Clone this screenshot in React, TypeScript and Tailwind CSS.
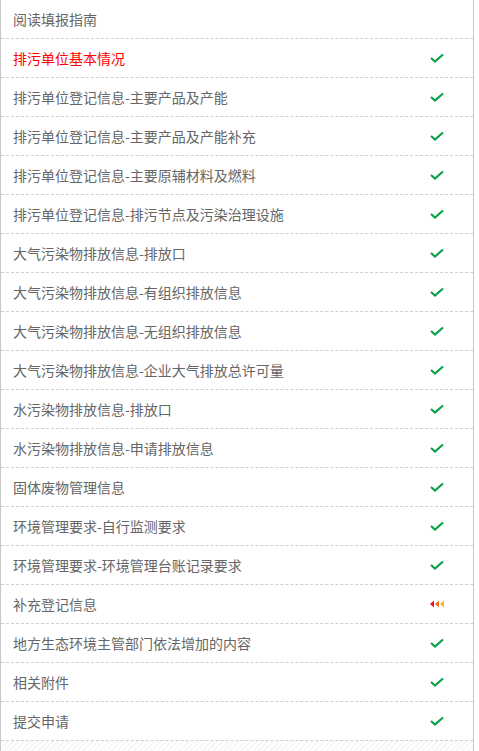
import React from 'react';

const items = [
  { label: '阅读填报指南', state: 'none' },
  { label: '排污单位基本情况', state: 'done', active: true },
  { label: '排污单位登记信息-主要产品及产能', state: 'done' },
  { label: '排污单位登记信息-主要产品及产能补充', state: 'done' },
  { label: '排污单位登记信息-主要原辅材料及燃料', state: 'done' },
  { label: '排污单位登记信息-排污节点及污染治理设施', state: 'done' },
  { label: '大气污染物排放信息-排放口', state: 'done' },
  { label: '大气污染物排放信息-有组织排放信息', state: 'done' },
  { label: '大气污染物排放信息-无组织排放信息', state: 'done' },
  { label: '大气污染物排放信息-企业大气排放总许可量', state: 'done' },
  { label: '水污染物排放信息-排放口', state: 'done' },
  { label: '水污染物排放信息-申请排放信息', state: 'done' },
  { label: '固体废物管理信息', state: 'done' },
  { label: '环境管理要求-自行监测要求', state: 'done' },
  { label: '环境管理要求-环境管理台账记录要求', state: 'done' },
  { label: '补充登记信息', state: 'todo' },
  { label: '地方生态环境主管部门依法增加的内容', state: 'done' },
  { label: '相关附件', state: 'done' },
  { label: '提交申请', state: 'done' },
];

function Check() {
  return (
    <svg width="14" height="10" viewBox="0 0 14 10">
      <path d="M1 5 L5 8.5 L13 1.5" fill="none" stroke="#0aa04a" strokeWidth="2.2" strokeLinejoin="miter" />
    </svg>
  );
}

function Arrows() {
  return (
    <svg width="14" height="8" viewBox="0 0 14 8">
      <path d="M0 4 L4 0.5 L4 7.5 Z" fill="#e8101a" />
      <path d="M5 4 L9 0.5 L9 7.5 Z" fill="#f26a1b" />
      <path d="M10 4 L14 0.5 L14 7.5 Z" fill="#fbb41c" />
    </svg>
  );
}

export default function App() {
  return (
    <div
      className="w-[474px] h-[751px] bg-white border-l border-r border-[#c8c8c8] flex flex-col overflow-hidden"
      style={{ fontFamily: '"Microsoft YaHei", "Noto Sans CJK SC", sans-serif' }}
    >
      {items.map((item, i) => (
        <div
          key={i}
          className="h-[39px] shrink-0 flex items-center justify-between pl-3 pr-[29px] border-b border-dashed border-[#cfcfcf]"
        >
          <span className={`text-[14px] ${item.active ? 'text-[#ff0000]' : 'text-[#666666]'}`}>
            {item.label}
          </span>
          <span className="flex items-center justify-center w-[14px]">
            {item.state === 'done' && <Check />}
            {item.state === 'todo' && <Arrows />}
          </span>
        </div>
      ))}
      <div className="flex-1 bg-[repeating-linear-gradient(135deg,#f7f7f7_0px,#f7f7f7_2px,#ffffff_2px,#ffffff_4px)]" />
    </div>
  );
}
